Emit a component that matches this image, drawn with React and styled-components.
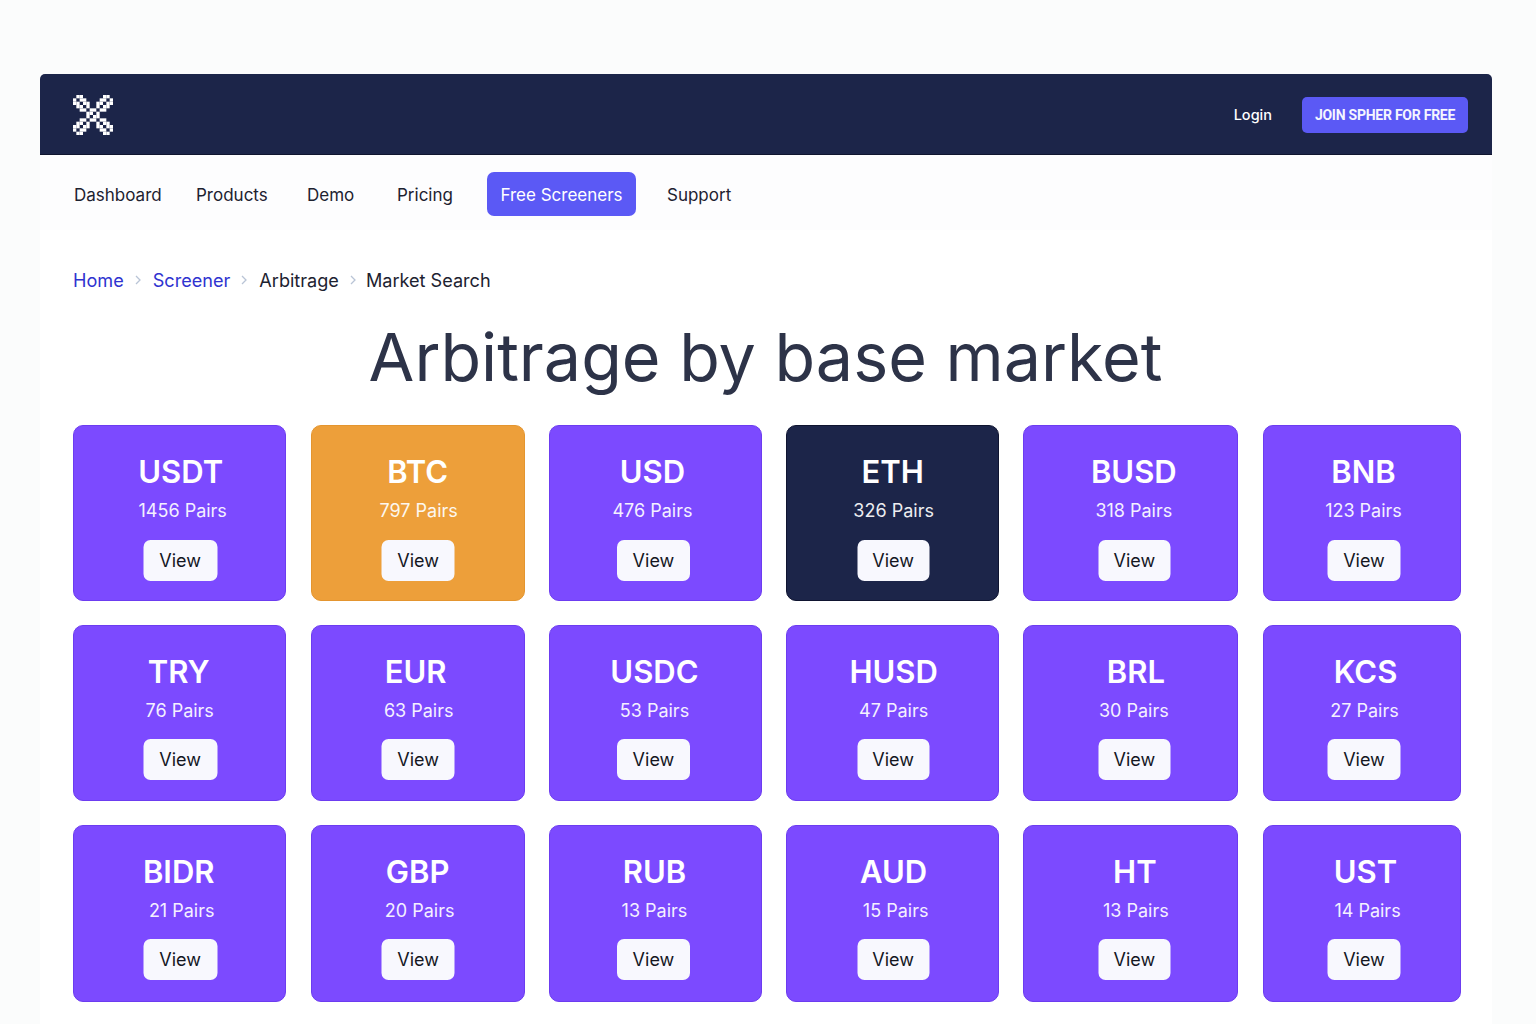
import React from 'react'
import styled, { createGlobalStyle } from 'styled-components'

const GlobalStyle = createGlobalStyle`
  html, body {
    margin: 0;
    padding: 0;
    background: #fbfcfc;
    font-family: Inter, "Liberation Sans", sans-serif;
  }
`

const cards = [
  { name: 'USDT', pairs: '1456 Pairs', nudge: 1, pairNudge: 3 },
  { name: 'BTC', pairs: '797 Pairs', tone: 'orange', nudge: 0, pairNudge: 1 },
  { name: 'USD', pairs: '476 Pairs', nudge: -3, pairNudge: -3 },
  { name: 'ETH', pairs: '326 Pairs', tone: 'navy', nudge: 0, pairNudge: 1 },
  { name: 'BUSD', pairs: '318 Pairs', nudge: 3, pairNudge: 3 },
  { name: 'BNB', pairs: '123 Pairs', nudge: 2, pairNudge: 2 },
  { name: 'TRY', pairs: '76 Pairs', nudge: -1, pairNudge: 0 },
  { name: 'EUR', pairs: '63 Pairs', nudge: -2, pairNudge: 1 },
  { name: 'USDC', pairs: '53 Pairs', nudge: -1, pairNudge: -1 },
  { name: 'HUSD', pairs: '47 Pairs', nudge: 1, pairNudge: 1 },
  { name: 'BRL', pairs: '30 Pairs', nudge: 5, pairNudge: 3 },
  { name: 'KCS', pairs: '27 Pairs', nudge: 4, pairNudge: 3 },
  { name: 'BIDR', pairs: '21 Pairs', nudge: -1, pairNudge: 2 },
  { name: 'GBP', pairs: '20 Pairs', nudge: 0, pairNudge: 2 },
  { name: 'RUB', pairs: '13 Pairs', nudge: -1, pairNudge: -1 },
  { name: 'AUD', pairs: '15 Pairs', nudge: 1, pairNudge: 3 },
  { name: 'HT', pairs: '13 Pairs', nudge: 4, pairNudge: 5 },
  { name: 'UST', pairs: '14 Pairs', nudge: 4, pairNudge: 6 },
]

// the View buttons line up per column and are not quite centred in their cards
const buttonColumns = [
  { width: 74, nudge: 0.5 },
  { width: 73, nudge: 0.5 },
  { width: 73, nudge: -2 },
  { width: 72, nudge: 0.5 },
  { width: 72, nudge: 3.5 },
  { width: 73, nudge: 2.5 },
]

const navItems = [
  { label: 'Dashboard', width: 122 },
  { label: 'Products', width: 111 },
  { label: 'Demo', width: 90 },
  { label: 'Pricing', width: 90 },
]

// pixel pattern of the logo, 12 x 12 cells
const logoRows = [
  '.XX......XX.',
  'X.XX....XX.X',
  'XX.XX..XX.XX',
  '.XX.X..X.XX.',
  '..XX.XX.XX..',
  '....XX.X....',
  '....X.XX....',
  '..XX.XX.XX..',
  '.XX.X..X.XX.',
  'XX.XX..XX.XX',
  'X.XX....XX.X',
  '.XX......XX.',
]

function Logo() {
  return (
    <svg width="40" height="40" viewBox="0 0 12 12">
      {logoRows.map((row, y) =>
        row.split('').map((c, x) =>
          c === 'X' ? <rect key={x + '-' + y} x={x} y={y} width="1" height="1" fill="#fff" /> : null
        )
      )}
    </svg>
  )
}

function Chevron({ extra = 0 }) {
  return (
    <ChevronIcon $extra={extra} width="8" height="12" viewBox="0 0 8 12" fill="none">
      <path d="M2 2l4 4-4 4" stroke="#b9c4d6" strokeWidth="1.3" />
    </ChevronIcon>
  )
}

function App() {
  return (
    <Page>
      <GlobalStyle />
      <Header>
        <Logo />
        <HeaderRight>
          <Login>Login</Login>
          <JoinButton>JOIN SPHER FOR FREE</JoinButton>
        </HeaderRight>
      </Header>
      <Nav>
        {navItems.map((item) => (
          <NavItem key={item.label} $width={item.width}>{item.label}</NavItem>
        ))}
        <ActiveNavItem>Free Screeners</ActiveNavItem>
        <NavItem $width={90} $pad>Support</NavItem>
      </Nav>
      <Main>
        <Breadcrumb>
          <CrumbLink>Home</CrumbLink>
          <Chevron extra={1} />
          <CrumbLink>Screener</CrumbLink>
          <Chevron extra={1} />
          <Crumb>Arbitrage</Crumb>
          <Chevron extra={-1} />
          <Crumb>Market Search</Crumb>
        </Breadcrumb>
        <Title>Arbitrage by base market</Title>
        <Grid>
          {cards.map((card, i) => {
            const column = buttonColumns[i % 6]
            return (
              <Card key={card.name} $tone={card.tone}>
                <CardName $nudge={card.nudge}>{card.name}</CardName>
                <CardPairs $nudge={card.pairNudge}>{card.pairs}</CardPairs>
                <ViewButton $first={i < 6} $width={column.width} $nudge={column.nudge}>View</ViewButton>
              </Card>
            )
          })}
        </Grid>
      </Main>
    </Page>
  )
}

export default App

const Page = styled.div`
  width: 1452px;
  height: 950px;
  margin: 74px 0 0 40px;
  background: #fff;
  overflow: hidden;
`

const Header = styled.header`
  height: 81px;
  box-sizing: border-box;
  background: #1c2549;
  border-radius: 5px 5px 0 0;
  border-bottom: 1px solid #10152f;
  display: flex;
  align-items: center;
  justify-content: space-between;
  padding: 1px 24px 0 33px;
`

const HeaderRight = styled.div`
  display: flex;
  align-items: center;
  gap: 30px;
`

const Login = styled.span`
  color: #fff;
  font-size: 14.5px;
  font-weight: 500;
`

const JoinButton = styled.div`
  width: 166px;
  height: 36px;
  display: flex;
  align-items: center;
  justify-content: center;
  background: #5b59f5;
  border-radius: 5px;
  color: #f4f5ff;
  font-family: Roboto, sans-serif;
  font-size: 14px;
  font-weight: 700;
  letter-spacing: -0.25px;
`

const Nav = styled.nav`
  height: 75px;
  box-sizing: border-box;
  background: #fdfdfe;
  display: flex;
  align-items: center;
  padding: 3px 0 0 34px;
`

const NavItem = styled.div`
  width: ${(p) => p.$width}px;
  padding-top: 2px;
  color: #1d2230;
  font-size: 17px;
  margin-left: ${(p) => (p.$pad ? '31px' : '0')};
`

const ActiveNavItem = styled.div`
  width: 149px;
  height: 44px;
  padding-top: 2px;
  display: flex;
  align-items: center;
  justify-content: center;
  box-sizing: border-box;
  background: #5b59f5;
  border-radius: 7px;
  color: #fff;
  font-size: 17px;
`

const Main = styled.main`
  padding: 39px 31px 0 33px;
`

const Breadcrumb = styled.div`
  display: flex;
  align-items: center;
  height: 22px;
  font-size: 18.1px;
`

const CrumbLink = styled.span`
  color: #2f33d0;
`

const Crumb = styled.span`
  color: #1d2230;
`

const ChevronIcon = styled.svg`
  margin: 0 ${(p) => 10 + p.$extra}px 0 10px;
`

const Title = styled.h1`
  margin: 30px 0 0;
  height: 73px;
  padding-right: 3px;
  text-align: center;
  color: #2d3348;
  font-size: 66.4px;
  font-weight: 400;
  line-height: 73px;
`

const Grid = styled.div`
  display: grid;
  grid-template-columns: 213.4px 214.2px 213px 213px 215px 198px;
  grid-auto-rows: 176.3px;
  column-gap: 24.2px;
  row-gap: 23.9px;
  margin-top: 31px;
`

const toneColor = { orange: '#ed9f3a', navy: '#1c2549' }
const toneBorder = { orange: '#e4952f', navy: '#0f1430' }

const Card = styled.div`
  box-sizing: border-box;
  background: ${(p) => toneColor[p.$tone] || '#7c4aff'};
  border: 1px solid ${(p) => toneBorder[p.$tone] || '#6c3cf0'};
  border-radius: 10px;
  display: flex;
  flex-direction: column;
  align-items: center;
  color: #fff;
`

const CardName = styled.div`
  margin-top: 26px;
  height: 40px;
  line-height: 40px;
  font-size: 31px;
  font-weight: 600;
  transform: translateX(${(p) => p.$nudge}px);
`

const CardPairs = styled.div`
  margin-top: 7px;
  height: 24px;
  line-height: 24px;
  font-size: 18px;
  opacity: 0.92;
  transform: translateX(${(p) => p.$nudge}px);
`

const ViewButton = styled.div`
  margin-top: ${(p) => (p.$first ? '17px' : '16px')};
  width: ${(p) => p.$width}px;
  height: 41px;
  display: flex;
  align-items: center;
  justify-content: center;
  background: #f8f8fe;
  border-radius: 7px;
  color: #14161f;
  font-size: 18px;
  transform: translateX(${(p) => p.$nudge}px);
`
